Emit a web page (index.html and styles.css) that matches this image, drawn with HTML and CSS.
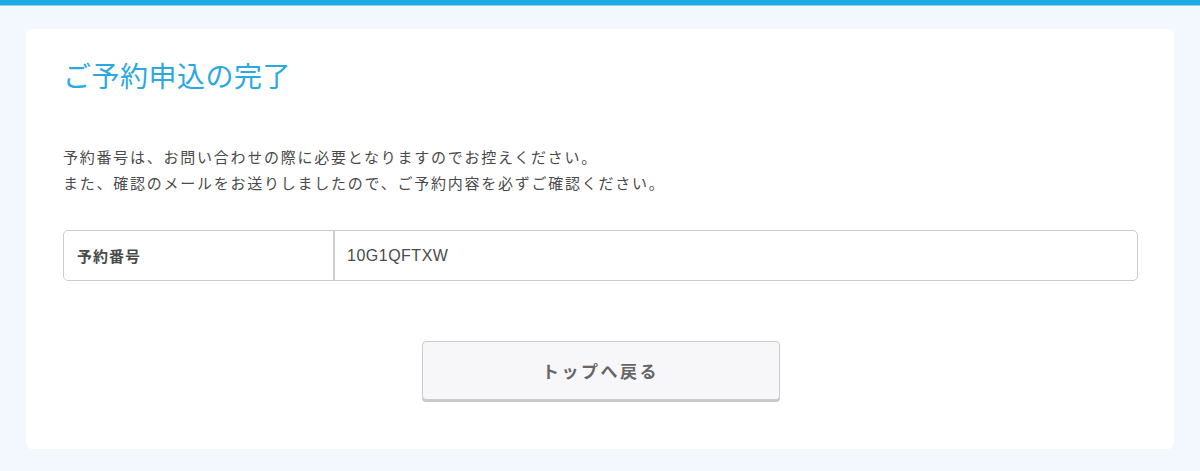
FILE: index.html
```html
<!DOCTYPE html>
<html lang="ja">
<head>
    <meta charset="UTF-8">
    <meta name="viewport" content="width=device-width, initial-scale=1.0">
    <title>ご予約申込の完了</title>
    <link rel="stylesheet" href="styles.css">
</head>
<body>
    <div class="top-bar"></div>

    <div class="card">
        <h1 class="title">ご予約申込の完了</h1>

        <p class="message">
            予約番号は、お問い合わせの際に必要となりますのでお控えください。<br>
            また、確認のメールをお送りしましたので、ご予約内容を必ずご確認ください。
        </p>

        <div class="info-table">
            <div class="info-label">予約番号</div>
            <div class="info-value">10G1QFTXW</div>
        </div>

        <div class="actions">
            <a class="btn-back" href="#">トップへ戻る</a>
        </div>
    </div>
</body>
</html>
```

FILE: styles.css
```css
body {
    font-family: "Noto Sans CJK JP", "Noto Sans", sans-serif;
    margin: 0;
    padding: 0;
    background-color: #f2f8fe;
    color: #4a4a4a;
}

.top-bar {
    height: 5px;
    background-color: #1eaae2;
    border-bottom: 1px solid #8fd2f0;
}

.card {
    margin: 23px 26px 23px;
    padding: 26px 36px 49px 37px;
    background-color: #fff;
    border-radius: 6px;
}

.title {
    margin: 0;
    font-size: 28px;
    line-height: 40px;
    font-weight: normal;
    letter-spacing: 0.5px;
    color: #2ba8df;
}

.message {
    margin: 49px 0 0;
    font-size: 15px;
    line-height: 26px;
    letter-spacing: 1.75px;
}

.info-table {
    display: flex;
    margin-top: 34px;
    height: 49px;
    border: 1px solid #cbcbcb;
    border-radius: 5px;
}

.info-label {
    display: flex;
    align-items: center;
    width: 256px;
    padding-left: 13px;
    border-right: 2px solid #cfcfcf;
    font-size: 15px;
    font-weight: bold;
    letter-spacing: 1px;
}

.info-value {
    display: flex;
    align-items: center;
    padding-left: 12px;
    font-family: "Liberation Sans", "Noto Sans CJK JP", sans-serif;
    font-size: 16px;
    letter-spacing: 0.5px;
}

.actions {
    display: flex;
    justify-content: center;
    margin-top: 60px;
}

.btn-back {
    display: flex;
    align-items: center;
    justify-content: center;
    width: 356px;
    height: 57px;
    background-color: #f7f6f9;
    border: 1px solid #cccccc;
    border-radius: 4px;
    box-shadow: 0 2px 0 #c9c9c9;
    color: #666;
    font-size: 17px;
    font-weight: bold;
    letter-spacing: 2.5px;
    text-decoration: none;
}
```
